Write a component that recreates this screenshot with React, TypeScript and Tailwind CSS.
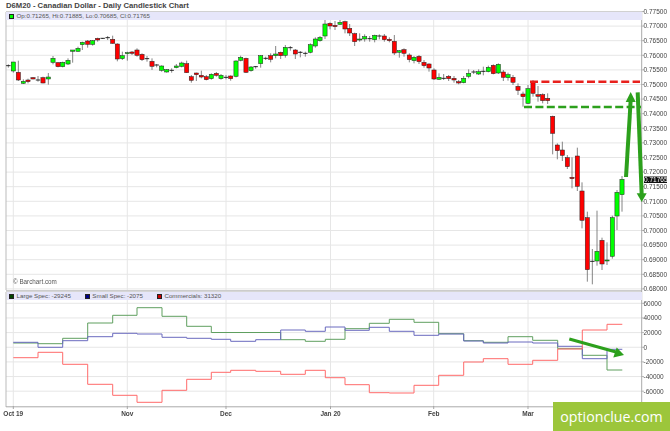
type Row = [number, number, number, number, number, string];

// candles, read off in 3x units: x, wick top, wick bottom, body top, body bottom, colour
const rowsA: Row[] = [
  [25,193,203,197,198,"k"],[40,186,218,186,213,"g"],[55,182,243,217,240,"r"],[70,238,252,244,250,"g"],[84,236,250,240,245,"r"],[99,231,238,233,237,"r"],[114,228,245,240,241,"k"],[129,230,250,233,249,"r"],[145,219,254,231,237,"g"],[159,168,193,175,187,"g"],[174,186,202,188,200,"r"],[188,185,202,187,200,"g"],[204,175,195,181,192,"g"],[218,150,188,150,154,"g"],[234,140,155,145,154,"g"],[247,125,150,127,134,"g"],[263,120,143,123,133,"r"],[278,120,137,122,133,"g"],[293,113,125,115,120,"r"],[308,114,117,115,116,"k"],[323,108,120,113,114,"k"],[338,107,131,118,130,"r"],[352,130,184,132,177,"r"],[367,155,180,167,176,"g"],[382,155,182,158,161,"g"],[396,153,165,156,160,"r"],[411,145,170,150,166,"r"],[426,160,183,163,179,"r"],[441,168,185,176,178,"k"],[456,175,210,184,199,"r"],[470,192,202,195,197,"k"],[485,196,215,198,211,"g"],[500,207,218,209,216,"g"],[515,205,218,211,212,"k"],[529,192,205,198,203,"g"],[545,185,202,189,199,"g"],[560,182,219,191,218,"r"],[574,225,248,230,241,"r"],[589,218,243,219,224,"r"],[604,212,235,226,231,"r"],[619,225,241,230,239,"r"],[634,220,239,223,236,"g"],[649,216,230,220,226,"r"],[663,222,239,226,236,"g"],
];
const rowsB: Row[] = [
  [3,225,238,232,233,"k"],[17,226,242,228,236,"r"],[33,181,232,183,229,"g"],[47,167,184,172,181,"g"],[63,173,219,175,217,"r"],[78,198,215,201,212,"g"],[92,198,206,200,203,"k"],[107,165,203,167,191,"g"],[122,170,180,175,176,"k"],[137,160,187,167,178,"r"],[152,138,175,162,167,"g"],[167,155,177,157,167,"r"],[181,135,173,142,166,"g"],[196,138,152,143,145,"k"],[211,147,177,150,162,"r"],[226,153,172,157,158,"k"],[241,155,170,160,161,"k"],[256,130,160,134,157,"g"],[271,112,143,117,138,"g"],[285,108,125,112,122,"g"],[300,60,117,72,108,"g"],[315,67,88,70,78,"r"],[330,63,90,76,80,"r"],[345,60,75,67,73,"g"],[360,62,100,65,87,"r"],[374,72,108,85,99,"r"],[389,98,138,101,125,"r"],[404,100,125,117,120,"g"],[419,103,125,110,117,"g"],[434,108,125,116,117,"k"],[449,104,127,106,119,"g"],[463,103,118,108,109,"k"],[478,102,125,108,119,"r"],[493,112,127,118,122,"r"],[508,105,165,124,159,"r"],[523,150,173,152,157,"g"],[537,145,170,149,160,"r"],[553,160,187,165,179,"r"],[567,168,190,172,182,"g"],[582,165,192,169,185,"r"],[597,180,203,187,197,"r"],[612,190,215,192,204,"r"],[627,205,240,210,237,"r"],[642,220,240,232,238,"g"],[656,222,240,235,236,"k"],[671,225,243,229,236,"r"],
];
const rowsC: Row[] = [
  [12,228,248,235,240,"r"],[26,240,253,245,249,"r"],[41,228,250,235,248,"g"],[56,208,235,220,229,"g"],[71,210,222,216,217,"k"],[86,208,225,215,222,"g"],[100,200,226,214,215,"k"],[115,197,217,202,215,"g"],[130,193,223,196,221,"r"],[145,190,222,193,219,"g"],[160,210,243,216,232,"r"],[174,218,242,224,233,"g"],[189,225,255,232,247,"r"],[204,250,285,259,271,"r"],[219,275,320,282,290,"r"],[234,255,312,266,310,"g"],[249,240,290,246,280,"r"],[264,258,305,284,289,"r"],[278,280,310,284,302,"r"],[293,280,312,295,302,"r"],[308,347,463,349,400,"r"],
];
const rowsD: Row[] = [
  [322,-5,43,0,17,"r"],[337,-10,48,15,31,"r"],[352,30,72,38,65,"r"],[366,37,130,97,101,"r"],[382,8,138,33,124,"r"],[396,112,250,138,226,"r"],[412,200,410,218,374,"r"],[427,312,418,349,350,"k"],[441,197,362,319,348,"g"],[456,278,375,286,357,"r"],[471,292,360,345,348,"g"],[487,212,341,218,334,"g"],[501,135,255,142,213,"g"],[516,93,200,103,149,"g"],
];

const shift = (rows: Row[], dx: number, dy: number): Row[] =>
  rows.map(([x, a, b, c, d, k]) => [(x + dx) / 3, (a + dy) / 3, (b + dy) / 3, (c + dy) / 3, (d + dy) / 3, k]);

const candles = [
  ...shift(rowsA, 0, 0),
  ...shift(rowsB, 675, 0),
  ...shift(rowsC, 1350, 0),
  ...shift(rowsD, 1350, 435),
];

const priceLabels = ["0.77500","0.77000","0.76500","0.76000","0.75500","0.75000","0.74500","0.74000","0.73500","0.73000","0.72500","0.72000","0.71500","0.71000","0.70500","0.70000","0.69500","0.69000","0.68500","0.68000"];
const cotLabels = ["60000","40000","20000","0","-20000","-40000","-60000"];
const months: [number, string][] = [[13.3,"Oct 19"],[127.3,"Nov"],[226,"Dec"],[330.5,"Jan 20"],[433.7,"Feb"],[528,"Mar"]];

const largeSpec = [[13.3,343],[38,343.7],[62.7,338.3],[87.7,323],[112.7,315.3],[137,307.7],[162,316.3],[186.7,326.3],[211.3,332.5],[280.7,339.7],[305.3,341.3],[325.3,339.3],[345,328.7],[369.3,323.3],[389.3,319.3],[414,322.3],[438.7,333.7],[463.7,340.7],[483.3,342.3],[508,336.7],[532.7,340.3],[557.7,348.7],[582.3,355.3],[607,370]];
const smallSpec = [[13.3,342.3],[38,347.3],[62.7,340.7],[87.7,336.7],[112.7,333.3],[137,334],[162,337.3],[186.7,338.3],[211.3,339.3],[230.7,341.3],[255.7,339.7],[280.7,330],[305.3,331.3],[325.3,327],[345,330.3],[369.3,327.3],[389.3,331.3],[414,335.3],[438.7,334],[463.7,341],[483.3,343],[508,342],[532.7,343],[557.7,346.3],[582.3,358.7],[607,349.3]];
const commercials = [[13.3,357.7],[38,352.3],[62.7,364.3],[87.7,384.3],[112.7,395.3],[137,402.3],[162,390.3],[186.7,379.3],[211.3,372.3],[230.7,370.3],[255.7,371.3],[280.7,374.3],[305.3,370.3],[325.3,377.7],[345,384.7],[369.3,392.7],[389.3,393],[414,385.3],[438.7,375.3],[463.7,362],[483.3,358.7],[508,364.3],[532.7,360.3],[557.7,349],[582.3,330],[607,324.3]];

function stepPath(points: number[][]) {
  let d = `M${points[0][0]} ${points[0][1]}`;
  points.slice(1).forEach(([x, y]) => {
    d += `H${x}V${y}`;
  });
  return d + "H622.3";
}

function LegendItem({ color, label }: { color: string; label: string }) {
  return (
    <span className="flex items-center gap-[2.5px]">
      <span className="h-[5px] w-[5px] border-[0.5px] border-[#222]" style={{ backgroundColor: color }} />
      {label}
    </span>
  );
}

function PricePanel() {
  return (
    <div className="relative h-[278px] shrink-0">
      <svg width="670" height="278" viewBox="0 12 670 278" className="block overflow-visible blur-[0.3px]">
        {priceLabels.map((label, i) => {
          const y = 11.5 + i * 14.6;
          return (
            <g key={label}>
              <line x1="6" x2="642" y1={y} y2={y} stroke="#e6e6e6" />
              <line x1="641.5" x2="644" y1={y} y2={y} stroke="#888" strokeWidth="0.6" />
              <text x="643.5" y={y + 2.3} fontSize="6.5" fill="#444">{label}</text>
            </g>
          );
        })}
        {months.map(([x]) => (
          <line key={x} x1={x} x2={x} y1="20" y2="290" stroke="#e6e6e6" />
        ))}
        <rect x="6" y="12" width="636" height="8" fill="#e6e6fa" />
        <line x1="6" x2="6" y1="12" y2="290" stroke="#bbb" />
        <line x1="641.7" x2="641.7" y1="12" y2="290" stroke="#aaa" />
        <line x1="6" x2="642" y1="11.7" y2="11.7" stroke="#ccc" />
        {candles.map(([x, a, b, c, d, k]) => (
          <g key={x as number}>
            <line x1={x} x2={x} y1={a} y2={b} stroke="#666" strokeWidth="0.8" />
            {k === "k" ? (
              <line x1={(x as number) - 2.2} x2={(x as number) + 2.2} y1={c} y2={c} stroke="#111" strokeWidth="0.9" />
            ) : (
              <rect
                x={(x as number) - 2.1}
                y={c}
                width="4.2"
                height={(d as number) - (c as number)}
                fill={k === "g" ? "#00ff00" : "#ff0000"}
                stroke="#222"
                strokeWidth="0.5"
              />
            )}
          </g>
        ))}
        <line x1="530" x2="640" y1="81.7" y2="81.7" stroke="#e8201c" strokeWidth="2.6" strokeDasharray="8 3.4" />
        <line x1="524" x2="641" y1="107" y2="107" stroke="#2ca01c" strokeWidth="2.6" strokeDasharray="8 3.4" />
        <path d="M626 177L630.7 100" stroke="#2ca01c" strokeWidth="4" fill="none" />
        <path d="M630.7 92L635.7 102H625.7Z" fill="#2ca01c" />
        <path d="M637.7 92.3L641.7 195" stroke="#2ca01c" strokeWidth="4" fill="none" />
        <path d="M641.7 202L636.7 193.3H646.7Z" fill="#2ca01c" />
        <rect x="644" y="176.5" width="23" height="6.5" fill="#111" />
        <text x="644" y="182" fontSize="6.5" fill="#fff">0.71765</text>
        <text x="13" y="284" fontSize="6.3" fill="#555">© Barchart.com</text>
      </svg>
      <div className="absolute left-[6px] right-[28.5px] top-0 flex h-[8px] items-center bg-[#e6e6fa] pl-[3px] text-[6.2px] text-[#555]">
        <LegendItem color="#00ff00" label="Op:0.71265, Hi:0.71885, Lo:0.70685, Cl:0.71765" />
      </div>
    </div>
  );
}

function CotPanel() {
  return (
    <div className="relative h-[141px] shrink-0">
      <svg width="670" height="141" viewBox="0 290 670 141" className="block blur-[0.3px]">
        <rect x="6" y="290" width="636" height="1.8" fill="#ccc" />
        {cotLabels.map((label, i) => {
          const y = 303.3 + i * 14.65;
          return (
            <g key={label}>
              <line x1="6" x2="642" y1={y} y2={y} stroke="#e6e6e6" />
              <line x1="641.5" x2="644" y1={y} y2={y} stroke="#888" strokeWidth="0.6" />
              <text x="643.5" y={y + 2.3} fontSize="6.5" fill="#444">{label}</text>
            </g>
          );
        })}
        {months.map(([x, label]) => (
          <g key={label}>
            <line x1={x} x2={x} y1="300" y2="407" stroke="#e6e6e6" />
            <line x1={x} x2={x} y1="406" y2="409" stroke="#666" strokeWidth="0.6" />
            <text x={x} y="415.5" fontSize="6.5" fontWeight="700" fill="#444" textAnchor="middle">{label}</text>
          </g>
        ))}
        <line x1="6" x2="6" y1="292" y2="407" stroke="#bbb" />
        <line x1="641.7" x2="641.7" y1="290" y2="407" stroke="#aaa" />
        <line x1="6" x2="642" y1="406.8" y2="406.8" stroke="#aaa" />
        <path d={stepPath(largeSpec)} fill="none" stroke="#5f9f5f" />
        <path d={stepPath(smallSpec)} fill="none" stroke="#6a6abf" />
        <path d={stepPath(commercials)} fill="none" stroke="#ff6a6a" />
        <path d="M569.3 339L616 352" stroke="#2ca01c" strokeWidth="3" fill="none" />
        <path d="M624 355L613.3 357.5L616.7 347.5Z" fill="#2ca01c" />
      </svg>
      <div className="absolute left-[7px] right-[28.5px] top-[2px] flex h-[8px] items-center gap-[14px] bg-[#e6e6fa] pl-[2px] text-[6.2px] text-[#555]">
        <LegendItem color="#004400" label="Large Spec: -29245" />
        <LegendItem color="#000088" label="Small Spec: -2075" />
        <LegendItem color="#cc0000" label="Commercials: 31320" />
      </div>
    </div>
  );
}

export default function App() {
  return (
    <div className="relative flex h-[431px] w-[670px] flex-col overflow-hidden bg-white font-['Liberation_Sans',Arial,sans-serif]">
      <div className="flex h-[12px] shrink-0 items-center pl-[6px] text-[7.7px] font-bold text-[#444]">
        D6M20 - Canadian Dollar - Daily Candlestick Chart
      </div>
      <PricePanel />
      <CotPanel />
      <div className="absolute bottom-0 right-0 flex h-[29px] w-[117px] items-center justify-center bg-[#9cc63b] font-['Open_Sans',sans-serif] text-[14.2px] text-white">
        optionclue.com
      </div>
    </div>
  );
}
